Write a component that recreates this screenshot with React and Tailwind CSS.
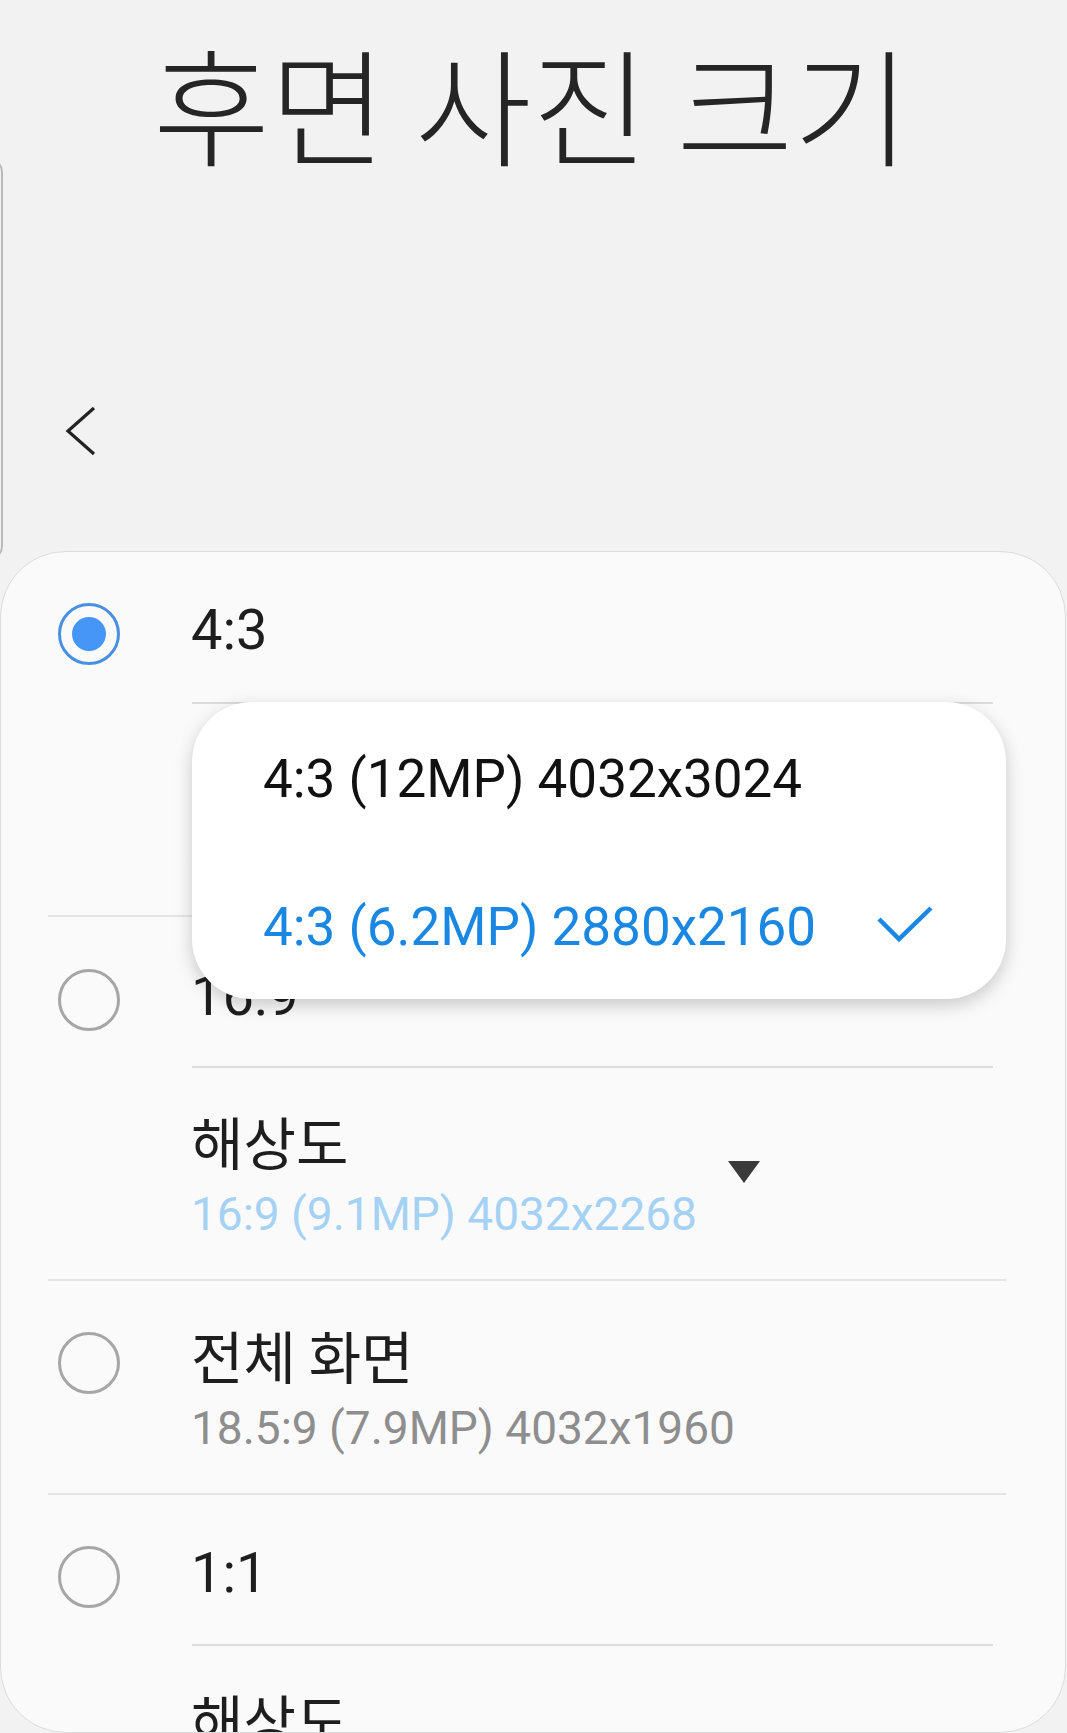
import React from "react";

const LATIN = { fontFamily: 'Roboto, "Noto Sans CJK KR", sans-serif' };
const KR = { fontFamily: '"Noto Sans CJK KR", Roboto, sans-serif' };

function Radio({ selected, mt }) {
  return (
    <div className="w-[190px] shrink-0 pl-[57px]">
      <div
        className={
          "w-[62px] h-[62px] rounded-full border-[3px] flex items-center justify-center " +
          (selected ? "border-[#4a90e2]" : "border-[#a6a6a6]")
        }
        style={{ marginTop: mt }}
      >
        {selected && <div className="w-[34px] h-[34px] rounded-full bg-[#4596f7]" />}
      </div>
    </div>
  );
}

function Triangle() {
  return (
    <svg width="32" height="22" viewBox="0 0 32 22" className="mt-[93px] shrink-0">
      <polygon points="0,0 32,0 16,22" fill="#3a3a3a" />
    </svg>
  );
}

function OptionRow({ selected, label, radioMt, textMt }) {
  return (
    <div className="flex items-start h-[149px] shrink-0">
      <Radio selected={selected} mt={radioMt} />
      <div
        className="text-[56px] leading-[56px] text-[#1e1e1e]"
        style={{ ...LATIN, marginTop: textMt }}
      >
        {label}
      </div>
    </div>
  );
}

function ResolutionRow({ value }) {
  return (
    <div className="flex items-start h-[211px] shrink-0">
      <div className="w-[190px] shrink-0" />
      <div className="w-[537px] shrink-0 flex flex-col">
        <div className="mt-[42px] text-[57px] leading-[60px] text-[#1e1e1e]" style={KR}>
          해상도
        </div>
        <div className="mt-[16px] text-[46px] leading-[56px] text-[#a5d2f4]" style={LATIN}>
          {value}
        </div>
      </div>
      <Triangle />
    </div>
  );
}

function InsetDivider() {
  return <div className="h-[2px] shrink-0 ml-[191px] mr-[72px] bg-[#dcdcdc]" />;
}

function FullDivider() {
  return <div className="h-[2px] shrink-0 ml-[47px] mr-[59px] bg-[#e4e4e4]" />;
}

export default function App() {
  return (
    <div className="relative w-[1067px] h-[1733px] overflow-hidden bg-[#f2f2f2] flex flex-col">
      {/* edge of previous panel */}
      <div className="absolute left-[-40px] top-[158px] w-[43px] h-[402px] rounded-[14px] border-[2px] border-[#b9b9b9]" />

      {/* Header */}
      <div className="h-[551px] shrink-0 flex flex-col">
        <div
          className="pt-[39px] pr-[4px] text-center text-[127px] leading-[127px] font-light text-[#252525]"
          style={KR}
        >
          후면 사진 크기
        </div>
        <div className="pl-[64px] mt-[238px]">
          <svg width="34" height="52" viewBox="0 0 34 52">
            <polyline
              points="30,4 4,27 30,50"
              fill="none"
              stroke="#232323"
              strokeWidth="3.2"
            />
          </svg>
        </div>
      </div>

      {/* Card */}
      <div className="relative w-[1066px] flex-1 min-h-0 rounded-[66px] border border-[#dcdcdc] bg-[#fafafa] overflow-hidden flex flex-col">
        <div className="h-[1px] shrink-0" />
        <OptionRow selected label="4:3" radioMt={50} textMt={49} />
        <InsetDivider />
        <ResolutionRow value="4:3 (6.2MP) 2880x2160" />
        <FullDivider />
        <OptionRow label="16:9" radioMt={52} textMt={51} />
        <InsetDivider />
        <ResolutionRow value="16:9 (9.1MP) 4032x2268" />
        <FullDivider />
        <div className="flex items-start h-[212px] shrink-0">
          <Radio mt={51} />
          <div className="flex flex-col">
            <div className="mt-[43px] text-[57px] leading-[60px] text-[#1e1e1e]" style={KR}>
              전체 화면
            </div>
            <div className="mt-[16px] text-[46px] leading-[56px] text-[#8e8e8e]" style={LATIN}>
              18.5:9 (7.9MP) 4032x1960
            </div>
          </div>
        </div>
        <FullDivider />
        <OptionRow label="1:1" radioMt={51} textMt={50} />
        <InsetDivider />
        <div className="flex items-start shrink-0">
          <div className="w-[190px] shrink-0" />
          <div className="mt-[42px] text-[57px] leading-[60px] text-[#1e1e1e]" style={KR}>
            해상도
          </div>
        </div>
      </div>

      {/* Dropdown popup */}
      <div className="absolute left-[192px] top-[702px] w-[814px] h-[297px] rounded-[60px] bg-white shadow-[0_6px_18px_rgba(0,0,0,0.2)] flex flex-col">
        <div className="h-[148px] flex items-center pl-[71px] pt-[6px]">
          <span className="text-[53px] leading-[53px] text-[#111]" style={LATIN}>
            4:3 (12MP) 4032x3024
          </span>
        </div>
        <div className="h-[149px] flex items-center pl-[71px] pr-[72px] pt-[6px]">
          <span className="text-[53px] leading-[53px] text-[#1a87e3]" style={LATIN}>
            4:3 (6.2MP) 2880x2160
          </span>
          <svg width="58" height="40" viewBox="0 0 58 40" className="ml-auto mb-[6px]">
            <polyline
              points="3,14 23,34 55,3"
              fill="none"
              stroke="#1a87e3"
              strokeWidth="4.5"
            />
          </svg>
        </div>
      </div>
    </div>
  );
}
